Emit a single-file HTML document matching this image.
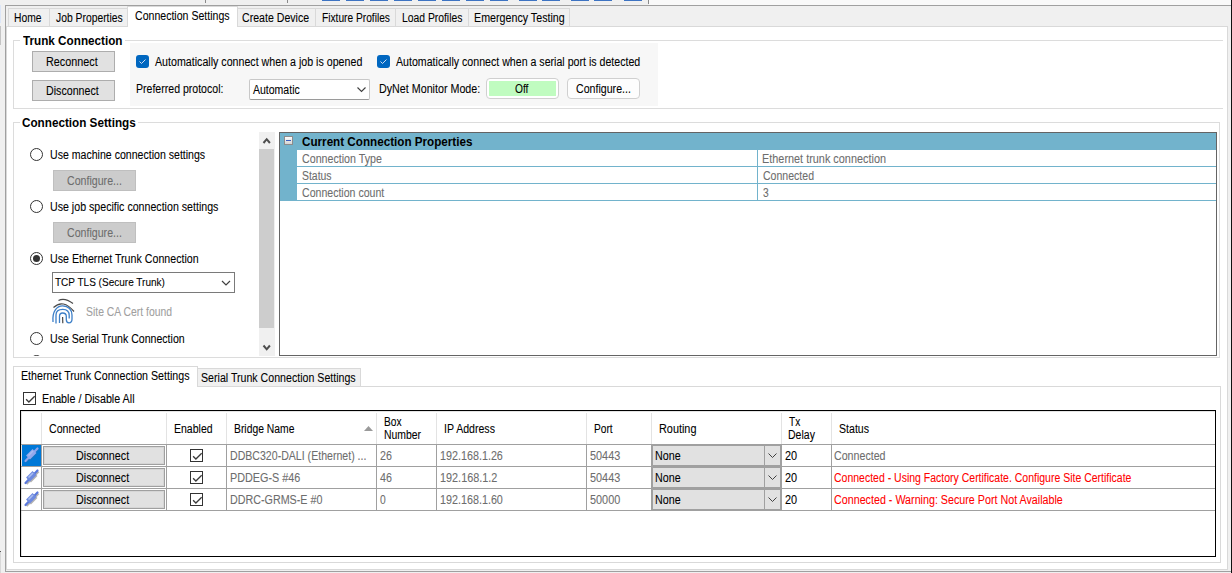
<!DOCTYPE html>
<html><head><meta charset="utf-8"><style>
html,body{margin:0;padding:0}
body{width:1232px;height:573px;overflow:hidden;position:relative;background:#f0f0f0;font-family:"Liberation Sans",sans-serif;font-size:12px;color:#000}
.b{position:absolute;box-sizing:border-box}
.t{position:absolute;white-space:pre;font-family:"Liberation Sans",sans-serif;font-size:12px;line-height:14px;transform-origin:0 0;color:#000;-webkit-text-stroke:0.08px currentColor}
.tab{position:absolute;box-sizing:border-box;background:#f0f0f0;border:1px solid #d9d9d9}
.btn{position:absolute;box-sizing:border-box;background:#e1e1e1;border:1px solid #adadad}
.cb{position:absolute;box-sizing:border-box;width:13px;height:13px}
.rad{position:absolute;box-sizing:border-box;width:13px;height:13px;border:1px solid #333;border-radius:50%;background:#fff}
.hl{position:absolute;height:1px}
.vl{position:absolute;width:1px}
svg{position:absolute;overflow:visible}

</style></head><body>
<!-- top strip -->
<div class="b" style="left:0;top:0;width:649px;height:5px;background:#f0f0f0"></div><div class="b" style="left:649px;top:0;width:582px;height:5px;background:#f9f9f9"></div><div class="b" style="left:205px;top:0;width:1px;height:3px;background:#8a8a8a"></div><div class="b" style="left:287px;top:0;width:1px;height:3px;background:#8a8a8a"></div><div class="b" style="left:0;top:5px;width:1px;height:18px;background:#dce6f8"></div><div class="b" style="left:0;top:26px;width:1px;height:19px;background:#c4c4c4"></div><div class="b" style="left:0;top:551px;width:1px;height:1px;background:#555"></div><div class="b" style="left:0;top:552px;width:1px;height:21px;background:#d8d8d8"></div>
<div class="b" style="left:322px;top:0;width:18px;height:1px;background:#3d73c2"></div>
<div class="b" style="left:346px;top:0;width:18px;height:1px;background:#3d73c2"></div>
<div class="b" style="left:370px;top:0;width:18px;height:1px;background:#3d73c2"></div>
<div class="b" style="left:394px;top:0;width:18px;height:1px;background:#3d73c2"></div>
<div class="b" style="left:418px;top:0;width:18px;height:1px;background:#3d73c2"></div>
<div class="b" style="left:442px;top:0;width:18px;height:1px;background:#3d73c2"></div>
<div class="b" style="left:466px;top:0;width:18px;height:1px;background:#3d73c2"></div>
<div class="b" style="left:490px;top:0;width:18px;height:1px;background:#3d73c2"></div>
<div class="b" style="left:519px;top:0;width:18px;height:1px;background:#3d73c2"></div>
<div class="b" style="left:542px;top:0;width:18px;height:1px;background:#3d73c2"></div>
<div class="b" style="left:571px;top:0;width:18px;height:1px;background:#3d73c2"></div>
<div class="b" style="left:594px;top:0;width:18px;height:1px;background:#3d73c2"></div>
<div class="b" style="left:624px;top:0;width:18px;height:1px;background:#3d73c2"></div>
<div class="b" style="left:648px;top:0;width:1px;height:4px;background:#8a8a8a"></div>
<!-- frame -->
<div class="b" style="left:5px;top:5px;width:1226px;height:1px;background:#a0a0a0"></div>
<div class="b" style="left:5px;top:5px;width:1px;height:567px;background:#a0a0a0"></div>
<div class="b" style="left:5px;top:571px;width:1226px;height:1px;background:#a0a0a0"></div>
<div class="b" style="left:1231px;top:0;width:1px;height:573px;background:#111"></div>
<!-- tabs -->
<div class="tab" style="left:8px;top:8px;width:42px;height:19px"></div>
<div class="tab" style="left:49px;top:8px;width:79px;height:19px"></div>
<div class="tab" style="left:237px;top:8px;width:79px;height:19px"></div>
<div class="tab" style="left:315px;top:8px;width:81px;height:19px"></div>
<div class="tab" style="left:395px;top:8px;width:74px;height:19px"></div>
<div class="tab" style="left:468px;top:8px;width:102px;height:19px"></div>
<!-- page -->
<div class="b" style="left:6px;top:26px;width:1222px;height:544px;background:#fff;border:1px solid #d9d9d9"></div>
<div class="b" style="left:127px;top:6px;width:111px;height:21px;background:#fff;border:1px solid #d9d9d9;border-bottom:none"></div>
<!-- trunk group -->
<div class="b" style="left:13px;top:40px;width:1210px;height:69px;border:1px solid #dcdcdc;border-right:none"></div>
<div class="b" style="left:20px;top:36px;width:105px;height:10px;background:#fff"></div>
<div class="btn" style="left:32px;top:51px;width:83px;height:21px"></div>
<div class="btn" style="left:32px;top:80px;width:83px;height:21px"></div>
<div class="b" style="left:130px;top:43px;width:528px;height:63px;background:#f7f7f7"></div>
<div class="cb" style="left:136px;top:55px;background:#0067c0;border-radius:3px"><svg width="13" height="13" style="left:0;top:0"><polyline points="3.5,6.5 5.5,8.5 9.5,4.5" fill="none" stroke="#e4e9f7" stroke-width="0.9"/></svg></div>
<div class="cb" style="left:377px;top:55px;background:#0067c0;border-radius:3px"><svg width="13" height="13" style="left:0;top:0"><polyline points="3.5,6.5 5.5,8.5 9.5,4.5" fill="none" stroke="#e4e9f7" stroke-width="0.9"/></svg></div>
<div class="b" style="left:249px;top:79px;width:121px;height:21px;background:#fff;border:1px solid #c8c8c8;border-bottom-color:#9a9a9a;border-radius:2px"></div>
<svg width="10" height="6" style="left:357px;top:87px"><polyline points="0.5,0.5 4.5,4.5 8.5,0.5" fill="none" stroke="#404040" stroke-width="1.1"/></svg>
<div class="b" style="left:486px;top:78px;width:73px;height:21px;background:#fff;border:1px solid #d0d0d0;border-radius:4px"></div>
<div class="b" style="left:489px;top:81px;width:67px;height:15px;background:#c0fcc0"></div>
<div class="b" style="left:567px;top:78px;width:73px;height:21px;background:#fdfdfd;border:1px solid #d0d0d0;border-radius:4px"></div>
<!-- connection settings group -->
<div class="b" style="left:13px;top:122px;width:1207px;height:236px;border:1px solid #dcdcdc"></div>
<div class="b" style="left:20px;top:117px;width:118px;height:10px;background:#fff"></div>
<div class="rad" style="left:30px;top:148px"></div>
<div class="btn" style="left:53px;top:170px;width:83px;height:21px;background:#cccccc;border-color:#bfbfbf"></div>
<div class="rad" style="left:30px;top:200px"></div>
<div class="btn" style="left:53px;top:222px;width:83px;height:21px;background:#cccccc;border-color:#bfbfbf"></div>
<div class="rad" style="left:30px;top:252px"><div class="b" style="left:2px;top:2px;width:7px;height:7px;border-radius:50%;background:#333"></div></div>
<div class="b" style="left:52px;top:272px;width:183px;height:21px;background:#fff;border:1px solid #7a7a7a"></div>
<svg width="12" height="8" style="left:221px;top:280px"><polyline points="1,1 5,5 9,1" fill="none" stroke="#404040" stroke-width="1.2"/></svg>
<svg width="30" height="30" style="left:49px;top:296px">
<path d="M9.5,4.5 Q15.5,1 24,7.5" fill="none" stroke="#4a4a4a" stroke-width="1.2"/>
<path d="M4.5,11.5 Q14,2.5 25,15.5" fill="none" stroke="#4a4a4a" stroke-width="1.2"/>
<path d="M4,26 C3,15 8,9.8 13.6,9.8 C19.5,9.8 23,14 23,19 L23,23 C23,25.5 21.5,26.8 20,26.8 C18.5,26.8 17.3,25.5 17.3,23.5 L17.3,20.5 C17.3,18.5 15.8,17 13.6,17 C11.5,17 10.5,18.5 10.5,20.5 L10.5,27" fill="none" stroke="#3c7fc8" stroke-width="1.3"/>
<path d="M7,27.5 L7,19 C7,15.5 9.5,13.3 13.8,13.3 C18,13.3 20.2,16 20.2,19.5 L20.2,22.5" fill="none" stroke="#3c7fc8" stroke-width="1.3"/>
<path d="M13.6,21 L13.8,27.2" fill="none" stroke="#4a4a4a" stroke-width="1.2"/>
</svg>
<div class="rad" style="left:30px;top:332px"></div>
<div class="b" style="left:13px;top:123px;width:1206px;height:233px;overflow:hidden"><div class="rad" style="left:17px;top:232px"></div></div>
<!-- scrollbar -->
<div class="b" style="left:259px;top:132px;width:16px;height:224px;background:#f0f0f0"></div>
<div class="b" style="left:259px;top:149px;width:15px;height:179px;background:#cdcdcd"></div>
<svg width="12" height="8" style="left:261px;top:136px"><polyline points="2.5,7 5.7,3.2 8.9,7" fill="none" stroke="#4d4d4d" stroke-width="2"/></svg>
<svg width="12" height="8" style="left:261px;top:343px"><polyline points="2.5,2.5 5.7,6.3 8.9,2.5" fill="none" stroke="#4d4d4d" stroke-width="2"/></svg>
<!-- property grid -->
<div class="b" style="left:279px;top:132px;width:938px;height:224px;background:#fff;border:1px solid #646464"></div>
<div class="b" style="left:280px;top:133px;width:936px;height:17px;background:#72b3cc"></div>
<div class="b" style="left:280px;top:150px;width:17px;height:51px;background:#72b3cc"></div>
<div class="hl" style="left:297px;top:166px;width:919px;background:#72b3cc"></div>
<div class="hl" style="left:297px;top:183px;width:919px;background:#72b3cc"></div>
<div class="hl" style="left:297px;top:200px;width:919px;background:#72b3cc"></div>
<div class="vl" style="left:757px;top:150px;height:51px;background:#72b3cc"></div>
<div class="b" style="left:284px;top:136px;width:9px;height:9px;background:linear-gradient(#fcfcfc,#d4d4d4);border:1px solid #8c8c8c"></div>
<div class="b" style="left:286px;top:140px;width:5px;height:1px;background:#3a5cc0"></div>
<!-- bottom tabs -->
<div class="tab" style="left:197px;top:368px;width:164px;height:19px"></div>
<div class="b" style="left:13px;top:386px;width:1208px;height:177px;background:#fff;border:1px solid #d9d9d9"></div>
<div class="b" style="left:13px;top:366px;width:185px;height:21px;background:#fff;border:1px solid #d9d9d9;border-bottom:none"></div>
<div class="cb" style="left:23px;top:392px;border:1px solid #333;background:#fff"><svg width="13" height="13" style="left:-1px;top:-1px"><polyline points="3.1,7.2 5.9,10 11.7,4.3" fill="none" stroke="#3a3a3a" stroke-width="1.3"/></svg></div>
<!-- grid -->
<div class="b" style="left:20px;top:410px;width:1196px;height:147px;background:#fff;border:1px solid #000;box-shadow:inset 1px 1px 0 #e4e4e4"></div>

<div class="vl" style="left:41px;top:413px;height:31px;background:#e3e3e3"></div>
<div class="vl" style="left:41px;top:444px;height:67px;background:#a0a0a0"></div>
<div class="vl" style="left:166px;top:413px;height:31px;background:#e3e3e3"></div>
<div class="vl" style="left:166px;top:444px;height:67px;background:#a0a0a0"></div>
<div class="vl" style="left:226px;top:413px;height:31px;background:#e3e3e3"></div>
<div class="vl" style="left:226px;top:444px;height:67px;background:#a0a0a0"></div>
<div class="vl" style="left:376px;top:413px;height:31px;background:#e3e3e3"></div>
<div class="vl" style="left:376px;top:444px;height:67px;background:#a0a0a0"></div>
<div class="vl" style="left:436px;top:413px;height:31px;background:#e3e3e3"></div>
<div class="vl" style="left:436px;top:444px;height:67px;background:#a0a0a0"></div>
<div class="vl" style="left:586px;top:413px;height:31px;background:#e3e3e3"></div>
<div class="vl" style="left:586px;top:444px;height:67px;background:#a0a0a0"></div>
<div class="vl" style="left:651px;top:413px;height:31px;background:#e3e3e3"></div>
<div class="vl" style="left:651px;top:444px;height:67px;background:#a0a0a0"></div>
<div class="vl" style="left:781px;top:413px;height:31px;background:#e3e3e3"></div>
<div class="vl" style="left:781px;top:444px;height:67px;background:#a0a0a0"></div>
<div class="vl" style="left:831px;top:413px;height:31px;background:#e3e3e3"></div>
<div class="vl" style="left:831px;top:444px;height:67px;background:#a0a0a0"></div>
<div class="hl" style="left:21px;top:444px;width:1194px;background:#a0a0a0"></div>
<div class="hl" style="left:21px;top:466px;width:1194px;background:#a0a0a0"></div>
<div class="hl" style="left:21px;top:488px;width:1194px;background:#a0a0a0"></div>
<div class="hl" style="left:21px;top:510px;width:1194px;background:#a0a0a0"></div>
<div class="b" style="left:22px;top:445px;width:19px;height:21px;background:#0078d7"></div>
<div class="btn" style="left:43px;top:446px;width:122px;height:19px;border:1px solid #a0a0a0;box-shadow:inset 0 0 0 1px #d6d6d6"></div>
<div class="cb" style="left:190px;top:449px;border:1px solid #333;background:#fff"><svg width="13" height="13" style="left:-1px;top:-1px"><polyline points="3.1,7.2 5.9,10 11.7,4.3" fill="none" stroke="#3a3a3a" stroke-width="1.3"/></svg></div>
<div class="b" style="left:652px;top:445px;width:129px;height:21px;background:#e1e1e1;border:1px solid #a0a0a0"></div>
<div class="vl" style="left:764px;top:446px;height:19px;background:#a0a0a0"></div>
<svg width="10" height="6" style="left:768px;top:453px"><polyline points="0.5,0.5 4.5,4.5 8.5,0.5" fill="none" stroke="#404040" stroke-width="1"/></svg>
<svg width="20" height="20" style="left:21px;top:445px"><g transform="translate(1,1)" opacity="0.15"><line x1="4.5" y1="16" x2="16.5" y2="3.5" stroke="#666" stroke-width="2.2"/><line x1="7" y1="12.5" x2="13.5" y2="6" stroke="#666" stroke-width="5.5"/></g><line x1="4.5" y1="16" x2="16.5" y2="3.5" stroke="#8fa3ea" stroke-width="2.2" stroke-linecap="round"/><line x1="7" y1="12.5" x2="13.5" y2="6" stroke="#93a8ec" stroke-width="5.5"/><line x1="7.5" y1="10.5" x2="12" y2="6" stroke="#a9bdf0" stroke-width="1.6"/></svg>
<div class="btn" style="left:43px;top:468px;width:122px;height:19px;border:1px solid #a0a0a0;box-shadow:inset 0 0 0 1px #d6d6d6"></div>
<div class="cb" style="left:190px;top:471px;border:1px solid #333;background:#fff"><svg width="13" height="13" style="left:-1px;top:-1px"><polyline points="3.1,7.2 5.9,10 11.7,4.3" fill="none" stroke="#3a3a3a" stroke-width="1.3"/></svg></div>
<div class="b" style="left:652px;top:467px;width:129px;height:21px;background:#e1e1e1;border:1px solid #a0a0a0"></div>
<div class="vl" style="left:764px;top:468px;height:19px;background:#a0a0a0"></div>
<svg width="10" height="6" style="left:768px;top:475px"><polyline points="0.5,0.5 4.5,4.5 8.5,0.5" fill="none" stroke="#404040" stroke-width="1"/></svg>
<svg width="20" height="20" style="left:21px;top:467px"><g transform="translate(1,1)" opacity="0.5"><line x1="4.5" y1="16" x2="16.5" y2="3.5" stroke="#666" stroke-width="2.2"/><line x1="7" y1="12.5" x2="13.5" y2="6" stroke="#666" stroke-width="5.5"/></g><line x1="4.5" y1="16" x2="16.5" y2="3.5" stroke="#5a78dc" stroke-width="2.2" stroke-linecap="round"/><line x1="7" y1="12.5" x2="13.5" y2="6" stroke="#6e8ae0" stroke-width="5.5"/><line x1="7.5" y1="10.5" x2="12" y2="6" stroke="#a9bdf0" stroke-width="1.6"/></svg>
<div class="btn" style="left:43px;top:490px;width:122px;height:19px;border:1px solid #a0a0a0;box-shadow:inset 0 0 0 1px #d6d6d6"></div>
<div class="cb" style="left:190px;top:493px;border:1px solid #333;background:#fff"><svg width="13" height="13" style="left:-1px;top:-1px"><polyline points="3.1,7.2 5.9,10 11.7,4.3" fill="none" stroke="#3a3a3a" stroke-width="1.3"/></svg></div>
<div class="b" style="left:652px;top:489px;width:129px;height:21px;background:#e1e1e1;border:1px solid #a0a0a0"></div>
<div class="vl" style="left:764px;top:490px;height:19px;background:#a0a0a0"></div>
<svg width="10" height="6" style="left:768px;top:497px"><polyline points="0.5,0.5 4.5,4.5 8.5,0.5" fill="none" stroke="#404040" stroke-width="1"/></svg>
<svg width="20" height="20" style="left:21px;top:489px"><g transform="translate(1,1)" opacity="0.5"><line x1="4.5" y1="16" x2="16.5" y2="3.5" stroke="#666" stroke-width="2.2"/><line x1="7" y1="12.5" x2="13.5" y2="6" stroke="#666" stroke-width="5.5"/></g><line x1="4.5" y1="16" x2="16.5" y2="3.5" stroke="#5a78dc" stroke-width="2.2" stroke-linecap="round"/><line x1="7" y1="12.5" x2="13.5" y2="6" stroke="#6e8ae0" stroke-width="5.5"/><line x1="7.5" y1="10.5" x2="12" y2="6" stroke="#a9bdf0" stroke-width="1.6"/></svg>
<svg width="10" height="6" style="left:364px;top:426px"><polygon points="0,5 4.5,0 9,5" fill="#9a9a9a"/></svg>
<div class="t" style="left:13.54px;top:11px;transform:scaleX(0.8581)">Home</div>
<div class="t" style="left:55.90px;top:11px;transform:scaleX(0.8617)">Job Properties</div>
<div class="t" style="left:134.75px;top:9px;transform:scaleX(0.8808)">Connection Settings</div>
<div class="t" style="left:241.90px;top:11px;transform:scaleX(0.8829)">Create Device</div>
<div class="t" style="left:321.65px;top:11px;transform:scaleX(0.8494)">Fixture Profiles</div>
<div class="t" style="left:401.64px;top:11px;transform:scaleX(0.8623)">Load Profiles</div>
<div class="t" style="left:474.11px;top:11px;transform:scaleX(0.8911)">Emergency Testing</div>
<div class="t" style="left:23.30px;top:34px;font-weight:700;-webkit-text-stroke:0;transform:scaleX(0.9755)">Trunk Connection</div>
<div class="t" style="left:45.70px;top:55px;transform:scaleX(0.9018)">Reconnect</div>
<div class="t" style="left:45.71px;top:84px;transform:scaleX(0.8881)">Disconnect</div>
<div class="t" style="left:155.00px;top:55px;transform:scaleX(0.8880)">Automatically connect when a job is opened</div>
<div class="t" style="left:396.00px;top:55px;transform:scaleX(0.8844)">Automatically connect when a serial port is detected</div>
<div class="t" style="left:135.52px;top:82px;transform:scaleX(0.8796)">Preferred protocol:</div>
<div class="t" style="left:253.00px;top:83px;transform:scaleX(0.8755)">Automatic</div>
<div class="t" style="left:379.41px;top:82px;transform:scaleX(0.8929)">DyNet Monitor Mode:</div>
<div class="t" style="left:514.60px;top:82px;transform:scaleX(0.8500)">Off</div>
<div class="t" style="left:575.60px;top:82px;transform:scaleX(0.8852)">Configure...</div>
<div class="t" style="left:21.90px;top:116px;font-weight:700;-webkit-text-stroke:0;transform:scaleX(0.9752)">Connection Settings</div>
<div class="t" style="left:49.92px;top:148px;transform:scaleX(0.8811)">Use machine connection settings</div>
<div class="t" style="left:66.50px;top:174px;color:#6d6d6d;transform:scaleX(0.8852)">Configure...</div>
<div class="t" style="left:49.91px;top:200px;transform:scaleX(0.8857)">Use job specific connection settings</div>
<div class="t" style="left:66.50px;top:226px;color:#6d6d6d;transform:scaleX(0.8852)">Configure...</div>
<div class="t" style="left:49.91px;top:252px;transform:scaleX(0.8880)">Use Ethernet Trunk Connection</div>
<div class="t" style="left:55.30px;top:275px;font-size:11px;transform:scaleX(0.9108)">TCP TLS (Secure Trunk)</div>
<div class="t" style="left:85.83px;top:305px;color:#a0a0a0;transform:scaleX(0.8663)">Site CA Cert found</div>
<div class="t" style="left:49.92px;top:332px;transform:scaleX(0.8815)">Use Serial Trunk Connection</div>
<div class="t" style="left:301.80px;top:135px;font-weight:700;-webkit-text-stroke:0;transform:scaleX(0.9720)">Current Connection Properties</div>
<div class="t" style="left:301.80px;top:152px;color:#6d6d6d;transform:scaleX(0.8889)">Connection Type</div>
<div class="t" style="left:301.93px;top:169px;color:#6d6d6d;transform:scaleX(0.8697)">Status</div>
<div class="t" style="left:302.00px;top:186px;color:#6d6d6d;transform:scaleX(0.8809)">Connection count</div>
<div class="t" style="left:762.09px;top:152px;color:#6d6d6d;transform:scaleX(0.9067)">Ethernet trunk connection</div>
<div class="t" style="left:763.00px;top:169px;color:#6d6d6d;transform:scaleX(0.8793)">Connected</div>
<div class="t" style="left:763.00px;top:186px;color:#6d6d6d;transform:scaleX(0.8571)">3</div>
<div class="t" style="left:21.31px;top:369px;transform:scaleX(0.8899)">Ethernet Trunk Connection Settings</div>
<div class="t" style="left:201.11px;top:371px;transform:scaleX(0.8851)">Serial Trunk Connection Settings</div>
<div class="t" style="left:42.10px;top:392px;transform:scaleX(0.8951)">Enable / Disable All</div>
<div class="t" style="left:48.60px;top:422px;transform:scaleX(0.8862)">Connected</div>
<div class="t" style="left:173.52px;top:422px;transform:scaleX(0.8767)">Enabled</div>
<div class="t" style="left:234.14px;top:422px;transform:scaleX(0.8623)">Bridge Name</div>
<div class="t" style="left:384.15px;top:415px;transform:scaleX(0.8500)">Box</div>
<div class="t" style="left:384.13px;top:428px;transform:scaleX(0.8690)">Number</div>
<div class="t" style="left:443.92px;top:422px;transform:scaleX(0.8807)">IP Address</div>
<div class="t" style="left:594.15px;top:422px;transform:scaleX(0.8476)">Port</div>
<div class="t" style="left:658.89px;top:422px;transform:scaleX(0.9050)">Routing</div>
<div class="t" style="left:789.00px;top:415px;transform:scaleX(0.8462)">Tx</div>
<div class="t" style="left:788.12px;top:428px;transform:scaleX(0.8767)">Delay</div>
<div class="t" style="left:838.52px;top:422px;transform:scaleX(0.8818)">Status</div>
<div class="t" style="left:75.51px;top:449px;transform:scaleX(0.8949)">Disconnect</div>
<div class="t" style="left:229.72px;top:449px;color:#6d6d6d;transform:scaleX(0.8817)">DDBC320-DALI (Ethernet) ...</div>
<div class="t" style="left:380.00px;top:449px;color:#6d6d6d;transform:scaleX(0.8923)">26</div>
<div class="t" style="left:439.90px;top:449px;color:#6d6d6d;transform:scaleX(0.8971)">192.168.1.26</div>
<div class="t" style="left:590.00px;top:449px;color:#6d6d6d;transform:scaleX(0.9061)">50443</div>
<div class="t" style="left:654.51px;top:449px;transform:scaleX(0.8929)">None</div>
<div class="t" style="left:785.00px;top:449px;transform:scaleX(0.9077)">20</div>
<div class="t" style="left:834.40px;top:449px;color:#6d6d6d;transform:scaleX(0.8879)">Connected</div>
<div class="t" style="left:75.51px;top:471px;transform:scaleX(0.8949)">Disconnect</div>
<div class="t" style="left:229.70px;top:471px;color:#6d6d6d;transform:scaleX(0.9013)">PDDEG-S #46</div>
<div class="t" style="left:380.00px;top:471px;color:#6d6d6d;transform:scaleX(0.8923)">46</div>
<div class="t" style="left:439.90px;top:471px;color:#6d6d6d;transform:scaleX(0.9048)">192.168.1.2</div>
<div class="t" style="left:590.00px;top:471px;color:#6d6d6d;transform:scaleX(0.9061)">50443</div>
<div class="t" style="left:654.51px;top:471px;transform:scaleX(0.8929)">None</div>
<div class="t" style="left:785.00px;top:471px;transform:scaleX(0.9077)">20</div>
<div class="t" style="left:834.40px;top:471px;color:#f00;transform:scaleX(0.8744)">Connected - Using Factory Certificate. Configure Site Certificate</div>
<div class="t" style="left:75.51px;top:493px;transform:scaleX(0.8949)">Disconnect</div>
<div class="t" style="left:229.71px;top:493px;color:#6d6d6d;transform:scaleX(0.8941)">DDRC-GRMS-E #0</div>
<div class="t" style="left:380.00px;top:493px;color:#6d6d6d;transform:scaleX(0.8571)">0</div>
<div class="t" style="left:439.90px;top:493px;color:#6d6d6d;transform:scaleX(0.8971)">192.168.1.60</div>
<div class="t" style="left:590.00px;top:493px;color:#6d6d6d;transform:scaleX(0.9061)">50000</div>
<div class="t" style="left:654.51px;top:493px;transform:scaleX(0.8929)">None</div>
<div class="t" style="left:785.00px;top:493px;transform:scaleX(0.9077)">20</div>
<div class="t" style="left:834.40px;top:493px;color:#f00;transform:scaleX(0.8934)">Connected - Warning: Secure Port Not Available</div>
</body></html>
